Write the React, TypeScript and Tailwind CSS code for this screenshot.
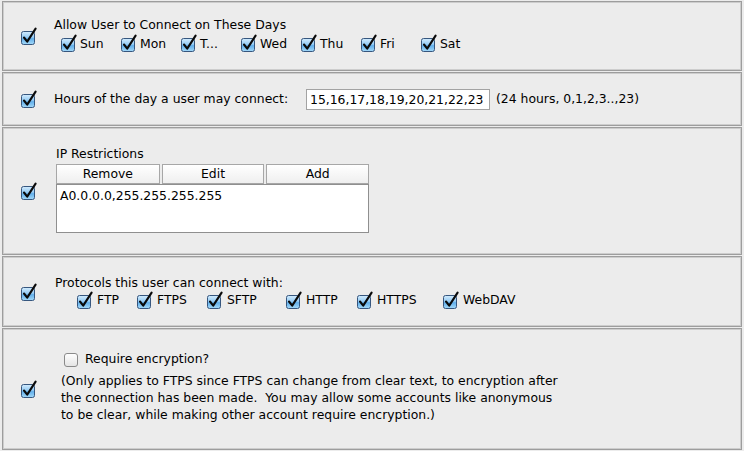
import React from "react";

const Check: React.FC<{ checked?: boolean }> = ({ checked = true }) =>
  checked ? (
    <svg width="17" height="18" viewBox="0 0 17 18" className="shrink-0 block">
      <defs>
        <linearGradient id="aquaFill" x1="0" y1="0" x2="0" y2="1">
          <stop offset="0" stopColor="#d4ecfd" />
          <stop offset="0.45" stopColor="#95cbf4" />
          <stop offset="0.55" stopColor="#62afea" />
          <stop offset="1" stopColor="#a5daf9" />
        </linearGradient>
      </defs>
      <rect x="1.5" y="4.5" width="13" height="13" rx="2" fill="url(#aquaFill)" stroke="#36567e" />
      <path d="M4 10.5 L7.2 14.6 L15.6 1.6" fill="none" stroke="#0a0a0a" strokeWidth="2.1" strokeLinecap="round" strokeLinejoin="round" />
    </svg>
  ) : (
    <svg width="17" height="18" viewBox="0 0 17 18" className="shrink-0 block">
      <defs>
        <linearGradient id="plainFill" x1="0" y1="0" x2="0" y2="1">
          <stop offset="0" stopColor="#ffffff" />
          <stop offset="1" stopColor="#e4e4e4" />
        </linearGradient>
      </defs>
      <rect x="1.5" y="3.5" width="13" height="13" rx="2.5" fill="url(#plainFill)" stroke="#8a8a8a" />
    </svg>
  );

const Panel: React.FC<{ h: string; children: React.ReactNode }> = ({ h, children }) => (
  <div className={`flex border border-[#9d9d9d] shadow-[inset_0_0_0_1px_#cdcdcd] bg-[#ececec] ${h}`}>
    <div className="self-center pl-[17px] shrink-0">
      <Check />
    </div>
    {children}
  </div>
);

const days = ["Sun", "Mon", "T...", "Wed", "Thu", "Fri", "Sat"];
const protocols: [string, string][] = [
  ["FTP", "w-[60px]"],
  ["FTPS", "w-[70px]"],
  ["SFTP", "w-[79px]"],
  ["HTTP", "w-[71px]"],
  ["HTTPS", "w-[86px]"],
  ["WebDAV", "w-[90px]"],
];

export default function App() {
  return (
    <div
      className="w-[744px] h-[451px] bg-[#ececec] pt-[1px] px-[2px] flex flex-col gap-[1px] text-[12.4px] text-black overflow-hidden"
      style={{ fontFamily: '"DejaVu Sans", Verdana, sans-serif' }}
    >
      <Panel h="h-[70px]">
        <div className="pl-[17px] pt-[14px]">
          <div className="leading-[18px]">Allow User to Connect on These Days</div>
          <div className="flex h-[18px] items-center pl-[6px]">
            {days.map((d) => (
              <div key={d} className="flex items-center w-[60px]">
                <Check />
                <span className="ml-[3px] leading-[18px] pt-[2px]">{d}</span>
              </div>
            ))}
          </div>
        </div>
      </Panel>

      <Panel h="h-[54px]">
        <div className="flex items-center pl-[17px]">
          <span className="w-[252px]">Hours of the day a user may connect:</span>
          <div className="w-[184px] h-[21px] bg-white border border-[#a3a3a3] pl-[3px] leading-[19px]">
            15,16,17,18,19,20,21,22,23
          </div>
          <span className="ml-[6px]">(24 hours, 0,1,2,3..,23)</span>
        </div>
      </Panel>

      <Panel h="h-[128px]">
        <div className="pl-[19px] pt-[17px]">
          <div className="leading-[18px]">IP Restrictions</div>
          <div className="flex gap-[2px] w-[313px] mt-[1px]">
            {["Remove", "Edit", "Add"].map((b, i) => (
              <div
                key={b}
                className={`h-[20px] border border-[#a7a7a7] bg-gradient-to-b from-white to-[#efefef] text-center leading-[18px] ${
                  i === 0 ? "w-[104px]" : "w-[103px]"
                }`}
              >
                {b}
              </div>
            ))}
          </div>
          <div className="w-[313px] h-[49px] bg-white border border-[#8f8f8f] pl-[3px] pt-[2px] leading-[18px]">
            A0.0.0.0,255.255.255.255
          </div>
        </div>
      </Panel>

      <Panel h="h-[71px]">
        <div className="pl-[18px] pt-[17px]">
          <div className="leading-[17px]">Protocols this user can connect with:</div>
          <div className="flex h-[17px] items-center pl-[21px]">
            {protocols.map(([p, w]) => (
              <div key={p} className={`flex items-center ${w}`}>
                <Check />
                <span className="ml-[4px] pt-[2px]">{p}</span>
              </div>
            ))}
          </div>
        </div>
      </Panel>

      <Panel h="h-[122px]">
        <div className="pl-[24px] pt-[21px]">
          <div className="flex items-center h-[18px] pl-[2px]">
            <Check checked={false} />
            <span className="ml-[5px]">Require encryption?</span>
          </div>
          <div className="mt-[4px] leading-[17px] whitespace-pre">
            {"(Only applies to FTPS since FTPS can change from clear text, to encryption after\nthe connection has been made.  You may allow some accounts like anonymous\nto be clear, while making other account require encryption.)"}
          </div>
        </div>
      </Panel>
    </div>
  );
}
